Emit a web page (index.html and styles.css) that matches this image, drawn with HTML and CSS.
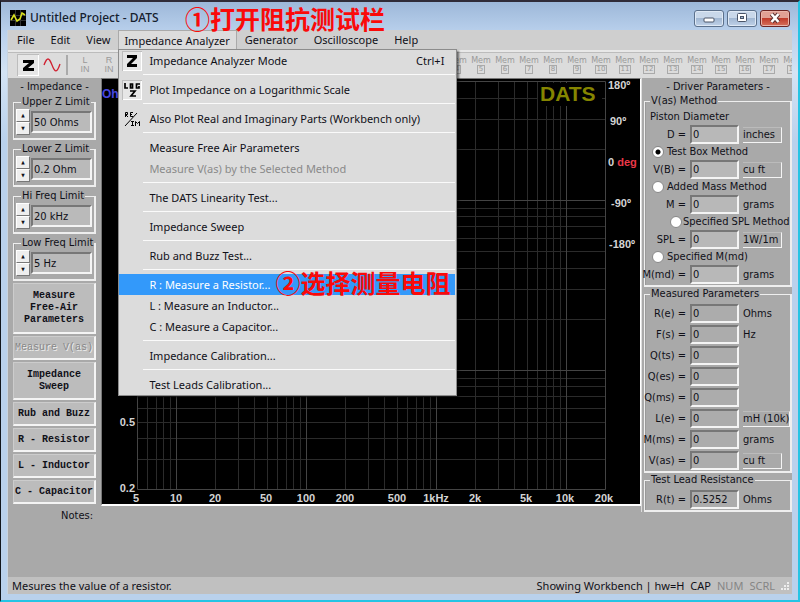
FILE: index.html
```html
<!DOCTYPE html>
<html lang="en">
<head>
<meta charset="utf-8">
<title>Untitled Project - DATS</title>
<link rel="stylesheet" href="styles.css">
</head>
<body>
<div class="window">
  <header class="titlebar">
    <svg class="app-icon" viewBox="0 0 16 16"><rect width="16" height="16" fill="#000"/><path d="M0 5.500h16M0 10.500h16M5.500 0v16M10.500 0v16" stroke="#333" fill="none"/><path d="M1 10l3-5 3 6 3-2 2-6 3 2" stroke="#d8e020" stroke-width="1.600" fill="none"/></svg>
    <h1 class="title">Untitled Project - DATS</h1>
    <button class="caption" aria-label="Minimize"><svg viewBox="0 0 14 12"><rect x="2" y="6" width="10" height="4" rx="1" fill="#fff" stroke="#4a5568"/></svg></button>
    <button class="caption" aria-label="Maximize"><svg viewBox="0 0 14 12"><rect x="2.500" y="1.500" width="9" height="8" rx="1" fill="#fff" stroke="#4a5568"/><rect x="5.500" y="4.500" width="3" height="2" fill="#9fb5cf" stroke="#4a5568"/></svg></button>
    <button class="caption close" aria-label="Close"><svg viewBox="0 0 14 12"><path d="M3.500 2l7 8M10.500 2l-7 8" stroke="#5a3030" stroke-width="4.400"/><path d="M3.500 2l7 8M10.500 2l-7 8" stroke="#fff" stroke-width="2.600"/></svg></button>
  </header>

  <div class="client">
    <nav class="menubar">
      <button>File</button>
      <button>Edit</button>
      <button>View</button>
      <div class="menu-host">
        <button class="open">Impedance Analyzer</button>
        <ul class="menu">
          <li><button><span class="ico pressed"><svg viewBox="0 0 20 20"><path d="M5 4h10v3l-6 6h6v3H5v-3l6-6H5z"/></svg></span>Impedance Analyzer Mode<kbd>Ctrl+I</kbd></button></li>
          <li class="sep"></li>
          <li><button><span class="ico pressed"><svg viewBox="0 0 20 20"><path d="M3 3v5h3M8.500 4h2v4h-2zM18 4h-3.500v4H17V6M8 11h5l-4 5h5" fill="none" stroke="#000" stroke-width="1.700"/></svg></span>Plot Impedance on a Logarithmic Scale</button></li>
          <li class="sep"></li>
          <li><button><span class="ico"><svg viewBox="0 0 20 20"><path d="M3.500 8V3.500h2v2h-2l2.500 2.500M11 3.500H8.500v4H11M8.500 5.500H10M3 17L15 4M9 12.500h3M10.500 12.500v4M9 16.500h3M13.500 17v-4.500l2 2 2-2V17" fill="none" stroke="#000"/></svg></span>Also Plot Real and Imaginary Parts (Workbench only)</button></li>
          <li class="sep"></li>
          <li><button><span class="ico"></span>Measure Free Air Parameters</button></li>
          <li><button disabled><span class="ico"></span>Measure V(as) by the Selected Method</button></li>
          <li class="sep"></li>
          <li><button><span class="ico"></span>The DATS Linearity Test...</button></li>
          <li class="sep"></li>
          <li><button><span class="ico"></span>Impedance Sweep</button></li>
          <li class="sep"></li>
          <li><button><span class="ico"></span>Rub and Buzz Test...</button></li>
          <li class="sep"></li>
          <li class="selected"><button><span class="ico"></span>R : Measure a Resistor...</button><strong class="note note-two">②选择测量电阻</strong></li>
          <li><button><span class="ico"></span>L : Measure an Inductor...</button></li>
          <li><button><span class="ico"></span>C : Measure a Capacitor...</button></li>
          <li class="sep"></li>
          <li><button><span class="ico"></span>Impedance Calibration...</button></li>
          <li class="sep"></li>
          <li><button><span class="ico"></span>Test Leads Calibration...</button></li>
        </ul>
      </div>
      <button>Generator</button>
      <button>Oscilloscope</button>
      <button>Help</button>
    </nav>

    <div class="toolbar">
      <button class="tool pressed" aria-label="Impedance mode"><svg viewBox="0 0 22 22"><path d="M6 6h11v3l-6 5h6v3H6v-3l6-5H6z"/></svg></button>
      <button class="tool" aria-label="Sine generator"><svg viewBox="0 0 22 22"><path d="M3 11C6 3 8 3 11 11S16 19 19 10" fill="none" stroke="#d02030" stroke-width="1.300"/></svg></button>
      <span class="tool-sep"></span>
      <button class="chan">L<br>IN</button>
      <button class="chan">R<br>IN</button>
      <div class="memories">
        <button>Mem<span>4</span></button><button>Mem<span>5</span></button><button>Mem<span>6</span></button><button>Mem<span>7</span></button><button>Mem<span>8</span></button><button>Mem<span>9</span></button><button>Mem<span>10</span></button><button>Mem<span>11</span></button><button>Mem<span>12</span></button><button>Mem<span>13</span></button><button>Mem<span>14</span></button><button>Mem<span>15</span></button><button>Mem<span>16</span></button><button>Mem<span>17</span></button><button>Mem<span>18</span></button>
      </div>
    </div>

    <main class="workspace">
      <section class="left">
        <h2>- Impedance -</h2>
        <fieldset class="limit"><legend><label for="uz">Upper Z Limit</label></legend><div class="spin"><button aria-label="Raise">▲</button><button aria-label="Lower">▼</button></div><input id="uz" value="50 Ohms"></fieldset>
        <fieldset class="limit"><legend><label for="lz">Lower Z Limit</label></legend><div class="spin"><button aria-label="Raise">▲</button><button aria-label="Lower">▼</button></div><input id="lz" value="0.2 Ohm"></fieldset>
        <fieldset class="limit"><legend><label for="hf">Hi Freq Limit</label></legend><div class="spin"><button aria-label="Raise">▲</button><button aria-label="Lower">▼</button></div><input id="hf" value="20 kHz"></fieldset>
        <fieldset class="limit"><legend><label for="lf">Low Freq Limit</label></legend><div class="spin"><button aria-label="Raise">▲</button><button aria-label="Lower">▼</button></div><input id="lf" value="5 Hz"></fieldset>
        <div class="actions">
          <button class="three">Measure<br>Free-Air<br>Parameters</button>
          <button disabled>Measure V(as)</button>
          <button class="two">Impedance<br>Sweep</button>
          <button>Rub and Buzz</button>
          <button>R - Resistor</button>
          <button>L - Inductor</button>
          <button>C - Capacitor</button>
        </div>
        <p class="notes">Notes:</p>
      </section>

      <section class="plot">
        <svg viewBox="0 0 538 425">
          <g class="minor">
            <path d="M45.500 3v408M54.500 3v408M61.500 3v408M68.500 3v408M113.500 3v408M136.500 3v408M152.500 3v408M165.500 3v408M175.500 3v408M184.500 3v408M191.500 3v408M198.500 3v408M243.500 3v408M266.500 3v408M282.500 3v408M295.500 3v408M305.500 3v408M314.500 3v408M321.500 3v408M328.500 3v408M373.500 3v408M396.500 3v408M412.500 3v408M425.500 3v408M435.500 3v408M444.500 3v408M451.500 3v408M458.500 3v408"/>
            <path d="M35 19.500h468M35 40.500h468M35 70.500h468M35 129.500h468M35 137.500h468M35 147.500h468M35 159.500h468M35 172.500h468M35 189.500h468M35 210.500h468M35 240.500h468M35 299.500h468M35 307.500h468M35 317.500h468M35 329.500h468M35 343.500h468M35 359.500h468M35 380.500h468"/>
          </g>
          <path class="major" d="M74.500 3v408M204.500 3v408M334.500 3v408M464.500 3v408M35 121.500h468M35 291.500h468M35.500 2.500h468v408h-468z"/>
          <rect x="436" y="4" width="64" height="23"/>
          <text class="brand" x="438" y="22">DATS</text>
          <text class="unit" x="0" y="19">Ohms</text>
          <g class="scale">
            <text x="506" y="10">180º</text><text x="508" y="46">90º</text><text x="506" y="87">0 <tspan class="deg">deg</tspan></text><text x="509" y="128">-90º</text><text x="507" y="169">-180º</text>
          </g>
          <g class="scale ends"><text x="33" y="347">0.5</text><text x="33" y="413">0.2</text></g>
          <g class="scale mids">
            <text x="34" y="423">5</text><text x="74" y="423">10</text><text x="113" y="423">20</text><text x="164" y="423">50</text><text x="204" y="423">100</text><text x="243" y="423">200</text><text x="295" y="423">500</text><text x="334" y="423">1kHz</text><text x="373" y="423">2k</text><text x="424" y="423">5k</text><text x="463" y="423">10k</text><text x="502" y="423">20k</text>
          </g>
        </svg>
      </section>

      <section class="right">
        <h2>- Driver Parameters -</h2>
        <fieldset>
          <legend>V(as) Method</legend>
          <p class="sub">Piston Diameter</p>
          <div class="row"><label for="d">D =</label><input id="d" value="0"><button class="unit-btn">inches</button></div>
          <label class="pick"><input type="radio" name="m" checked>Test Box Method</label>
          <div class="row"><label for="vb">V(B) =</label><input id="vb" value="0"><button class="unit-btn">cu ft</button></div>
          <label class="pick"><input type="radio" name="m">Added Mass Method</label>
          <div class="row"><label for="mm">M =</label><input id="mm" value="0"><span>grams</span></div>
          <label class="pick indent"><input type="radio" name="m">Specified SPL Method</label>
          <div class="row"><label for="spl">SPL =</label><input id="spl" value="0"><button class="unit-btn">1W/1m</button></div>
          <label class="pick"><input type="radio" name="m">Specified M(md)</label>
          <div class="row"><label for="mmd">M(md) =</label><input id="mmd" value="0"><span>grams</span></div>
        </fieldset>
        <fieldset class="measured">
          <legend>Measured Parameters</legend>
          <div class="row"><label for="re">R(e) =</label><input id="re" value="0"><span>Ohms</span></div>
          <div class="row"><label for="fs">F(s) =</label><input id="fs" value="0"><span>Hz</span></div>
          <div class="row"><label for="qts">Q(ts) =</label><input id="qts" value="0"></div>
          <div class="row"><label for="qes">Q(es) =</label><input id="qes" value="0"></div>
          <div class="row"><label for="qms">Q(ms) =</label><input id="qms" value="0"></div>
          <div class="row"><label for="le">L(e) =</label><input id="le" value="0"><button class="unit-btn">mH (10k)</button></div>
          <div class="row"><label for="mms">M(ms) =</label><input id="mms" value="0"><span>grams</span></div>
          <div class="row"><label for="vas">V(as) =</label><input id="vas" value="0"><button class="unit-btn">cu ft</button></div>
        </fieldset>
        <fieldset class="measured">
          <legend>Test Lead Resistance</legend>
          <div class="row"><label for="rt">R(t) =</label><input id="rt" value="0.5252"><span>Ohms</span></div>
        </fieldset>
      </section>
    </main>

    <footer class="status">
      <span class="hint">Mesures the value of a resistor.</span>
      <span class="mode">Showing Workbench | hw=H</span>
      <span class="lock">CAP</span>
      <span class="lock off">NUM</span>
      <span class="lock off">SCRL</span>
      <svg class="grip" viewBox="0 0 12 12"><path d="M8 3h2M5 6h2M8 6h2M2 9h2M5 9h2M8 9h2" stroke="#eee" stroke-width="2"/></svg>
    </footer>
  </div>
  <strong class="note note-one">①打开阻抗测试栏</strong>
</div>
</body>
</html>
```
FILE: styles.css
```css
* { box-sizing: border-box; }
body { margin: 0; font: 12px/14px "DejaVu Sans Condensed", "DejaVu Sans", sans-serif; color: #101018; }
button, input { font: inherit; color: inherit; margin: 0; padding: 0; border: 0; background: none; border-radius: 0; }
h1, h2, p, ul { margin: 0; padding: 0; font-weight: normal; font-size: inherit; list-style: none; }
svg { display: block; }

.window {
  position: relative; display: flex; flex-direction: column; min-height: 100vh;
  padding: 0 6px 6px; background: linear-gradient(#9db8d9, #b9d0ec 30px, #d3e3f4 70px, #b9d1ec 140px);
  border: 1px solid #25c4e4; border-width: 2px 2px 2px 1px; border-top-color: #302c38; border-left-color: #10151c;
}
.titlebar { display: flex; align-items: center; height: 28px; padding: 4px 2px 0 3px; }
.app-icon { width: 16px; height: 16px; margin-right: 4px; }
.title { flex: 1; font: 500 12px/16px "Noto Sans", sans-serif; color: #15202e; }
.caption { display: flex; align-items: center; justify-content: center; width: 30px; height: 17px; margin-left: 3px; border: 1px solid #5c718c; border-radius: 3px; background: linear-gradient(#c9d8ea 45%, #a2b8d3 50%, #c0d2e8); box-shadow: inset 0 0 0 1px #dfe9f5; }
.caption svg { width: 14px; height: 12px; }
.close { border-color: #6b2423; background: linear-gradient(#e0a095 45%, #c03c2c 50%, #d6705c); box-shadow: inset 0 0 0 1px #e9b4aa; }

.client { flex: 1; display: flex; flex-direction: column; background: #a9a9a9; border-left: 1px solid #c8d4e0; }
.menubar { display: flex; height: 20px; padding-left: 1px; background: #cfcfcf; font: 11px/20px "Noto Sans", sans-serif; }
.menubar > button { padding: 0 8px; }
.menu-host { position: relative; }
.open { height: 20px; padding: 0 6px 0 5px; border: 1px solid #aaa; border-bottom: 0; background: #dcdcdc; }
.menu { position: absolute; z-index: 2; top: 19px; left: 0; width: 339px; padding: 0 1px 0 0; background: #dcdcdc; border: 1px solid #8c8c8c; box-shadow: 2px 2px 2px #0008; }
.menu li { position: relative; height: 21px; }
.menu li.sep { height: 8px; margin-left: 24px; border-top: 3px solid #dcdcdc; }
.menu li.sep::before { content: ""; display: block; height: 1px; background: #fafafa; }
.menu button { display: flex; align-items: center; width: 100%; height: 21px; line-height: 21px; text-align: left; }
.menu button:disabled { color: #8a8a8a; }
.ico { width: 20px; height: 20px; margin: 0 7px 0 3px; }
.ico svg { width: 20px; height: 20px; }
.pressed { background: #e6e6e6; box-shadow: inset 1px 1px #bdbdbd, inset -1px -1px #fff; }
.menu kbd { margin-left: auto; padding-right: 11px; font: inherit; }
.menu .selected { background: #3399fa; color: #fff; }

.toolbar { display: flex; height: 28px; padding: 2px 0 2px 9px; overflow: hidden; background: #dcdcdc; border-top: 2px solid #e8e8e8; box-shadow: inset 0 1px #bcbcbc; font: 9px/9px "Liberation Sans", sans-serif; color: #999; text-shadow: 1px 1px #fff; }
.tool { flex: none; width: 22px; height: 22px; margin-right: 2px; }
.tool svg { width: 22px; height: 22px; }
.tool-sep { flex: none; width: 2px; height: 20px; margin: 1px 5px 0 1px; background: #aaa; }
.chan { flex: none; width: 24px; }
.memories { display: flex; margin-left: 324px; font: 8px/8px "DejaVu Sans", sans-serif; }
.memories button { flex: none; display: flex; flex-direction: column; align-items: center; justify-content: center; width: 24px; }
.memories span { padding: 0 1px; border: 1px solid #aaa; line-height: 7px; font-size: 7px; }

.workspace { flex: 1; display: grid; grid-template-columns: 93px 1fr 151px; align-items: start; }
h2 { text-align: center; line-height: 14px; }
fieldset { margin: 0; min-width: 0; border: 2px solid #eee; border-top-width: 1px; border-left-width: 1px; box-shadow: inset 1px 0 #999; }
legend { margin-left: 5px; padding: 0 1px; line-height: 14px; white-space: nowrap; }
.left { padding: 2px 5px 0; font-size: 11px; }
.left h2 { padding-bottom: 1px; }
.limit { display: flex; height: 45px; padding: 0 2px 3px; margin-bottom: 2px; }
.spin { display: flex; flex-direction: column; width: 14px; }
.spin button { height: 13px; background: #eee; border: 1px solid #fff; border-right-color: #777; border-bottom-color: #777; font-size: 5px; line-height: 5px; }
.limit input { flex: 1; min-width: 0; height: 22px; margin: 2px 0 0 1px; padding-left: 1px; font-size: 11px; background: #bababa; border: 2px solid #f4f4f4; border-top-color: #777; border-left-color: #777; }
.actions { display: grid; gap: 2px; font: bold 10px/12px "Liberation Mono", monospace; }
.actions button { height: 24px; white-space: nowrap; background: #bcbcbc; border: 1px solid #ccc; border-width: 1px 2px 2px 1px; border-right-color: #f4f4f4; border-bottom-color: #f4f4f4; }
.actions button.three { height: 51px; }
.actions button.two { height: 38px; }
.actions button:disabled { color: #888; font-weight: normal; text-shadow: 1px 1px #eee; }
.notes { padding: 5px 3px 0; text-align: right; }

.plot { background: #000; border: 1px solid #777; border-right: 1px solid #fff; border-bottom: 2px solid #fff; }
.plot svg { width: 100%; }
.minor { stroke: #2b2b2b; fill: none; }
.major { stroke: #444; fill: none; }
.brand { font: bold 21px "Liberation Sans", sans-serif; fill: #858500; }
.unit { font: bold 12px "Liberation Sans", sans-serif; fill: #4848e0; }
.scale { font: bold 11px "Liberation Sans", sans-serif; fill: #d4d4d4; }
.deg { fill: #ec3848; }
.ends { text-anchor: end; }
.mids { text-anchor: middle; }

.right { padding: 2px 0 0 2px; font-size: 11px; border-left: 1px solid #ddd; }
.right fieldset { padding: 1px 0; }
.sub { padding-left: 5px; line-height: 16px; }
.row { display: grid; grid-template-columns: 41px 49px auto; column-gap: 4px; align-items: center; justify-content: start; height: 19px; white-space: nowrap; }
.row label { text-align: right; justify-self: end; }
.row input { width: 49px; height: 19px; padding-left: 1px; font-size: 11px; background: #b8b8b8; border: 2px solid #f4f4f4; border-top-color: #777; border-left-color: #777; }
.unit-btn { min-width: 39px; height: 16px; text-align: left; border: 1px solid #bbb; border-left: 0; border-right-color: #f4f4f4; border-bottom-color: #f4f4f4; }
.pick { display: flex; align-items: center; height: 16px; padding-left: 7px; white-space: nowrap; }
.pick.indent { padding-left: 25px; }
.pick input { appearance: none; flex: none; width: 12px; height: 12px; margin-right: 3px; border: 1px solid #888; border-radius: 6px; background: #fff; }
.pick.indent input { margin-right: 1px; }
.pick input:checked { background: radial-gradient(#000 2px, #fff 3px); }
.right .measured { padding: 2px 0 0; }
.measured .row { height: 21px; }
.measured .row input { background: #acacac; }

.status { display: flex; align-items: center; height: 17px; padding: 0 1px 0 4px; background: #c0c0c0; font: 11px/16px "Noto Sans", sans-serif; }
.hint { flex: 1; }
.lock { margin-left: 6px; }
.off { color: #858585; }
.grip { width: 12px; height: 12px; margin-left: 4px; }

.note { position: absolute; z-index: 3; font: bold 25px/28px "Noto Sans CJK SC", sans-serif; color: #fa0a0a; white-space: nowrap; pointer-events: none; }
.note-one { left: 184px; top: 2px; }
.note-two { left: 156px; top: -6px; }
```
